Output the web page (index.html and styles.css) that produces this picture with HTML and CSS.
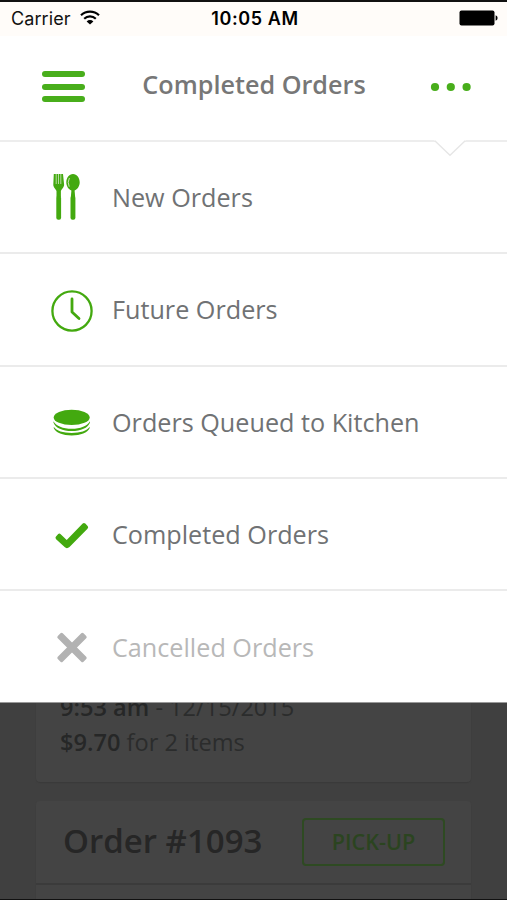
FILE: index.html
```
<!DOCTYPE html>
<html lang="en">
<head>
    <meta charset="UTF-8">
    <meta name="viewport" content="width=device-width, initial-scale=1.0">
    <title>Completed Orders</title>
    <link rel="stylesheet" href="styles.css">
</head>
<body>
    <div class="status-bar">
        <div class="carrier">
            <span>Carrier</span>
            <svg class="wifi" width="20" height="15" viewBox="0 0 20 15" fill="none" stroke="#000" stroke-width="2.2">
                <path d="M1 5.2a13 13 0 0 1 18 0"/>
                <path d="M4.2 8.7a8.4 8.4 0 0 1 11.6 0"/>
                <path d="M10 14.6L6.6 11.4a4.9 4.9 0 0 1 6.8 0z" fill="#000" stroke="none"/>
            </svg>
        </div>
        <div class="time">10:05 AM</div>
        <svg class="battery" width="39" height="16" viewBox="0 0 39 16">
            <rect x="0.5" y="0.5" width="35" height="15" rx="2"/>
            <path d="M36.6 5.2q2 0.8 2 2.8t-2 2.8z"/>
        </svg>
    </div>

    <header class="header">
        <button class="menu-button" aria-label="Menu">
            <span></span>
            <span></span>
            <span></span>
        </button>
        <h1>Completed Orders</h1>
        <svg class="more-button" width="42" height="10" viewBox="0 0 42 10" fill="#48ae1b">
            <circle cx="5" cy="5" r="4.1"/>
            <circle cx="20.8" cy="5" r="4.1"/>
            <circle cx="36.6" cy="5" r="4.1"/>
        </svg>
        <svg class="notch" width="32" height="17" viewBox="0 0 32 17">
            <path d="M0 0H32L16 15.5z" fill="#fff"/>
            <path d="M0.8 0.8L16 15.3L31.2 0.8" fill="none" stroke="#e6e6e6" stroke-width="1.4"/>
        </svg>
    </header>

    <ul class="menu">
        <li>
            <svg class="icon" width="44" height="48" viewBox="0 0 44 48" fill="#43a90f">
                <path d="M3.8 0H13L14.1 10.500c.2 2.800-2.400 4.200-3.200 6.500v6.500H6.500V17c-.8-2.300-3.400-3.700-3.200-6.500z"/>
                <path d="M6.2 0v10M8.5 0v10M10.8 0v10" stroke="#fff" stroke-width=".6"/>
                <rect x="6.3" y="22" width="4.8" height="23.7" rx="2"/>
                <path d="M23 0c3.900 0 6.700 3.900 6.700 8.300 0 4-2.300 7.200-5.100 8.300l.6 6.900h-4.400l.6-6.900c-2.800-1.100-5.100-4.300-5.100-8.300C16.300 3.900 19.100 0 23 0z"/>
                <path d="M19.400 4q-2.300 4.200-.2 8.700" fill="none" stroke="#fff" stroke-width=".7"/>
                <rect x="20.5" y="22" width="4.9" height="23.7" rx="2"/>
            </svg>
            <span>New Orders</span>
        </li>
        <li>
            <svg class="icon" width="44" height="48" viewBox="0 0 44 48" fill="none" stroke="#43a90f">
                <circle cx="22" cy="25" r="19.6" stroke-width="2.3"/>
                <path d="M22 13v13l7 6.6" stroke-width="2.8" stroke-linecap="round" stroke-linejoin="round"/>
            </svg>
            <span>Future Orders</span>
        </li>
        <li>
            <svg class="icon" width="44" height="48" viewBox="0 0 44 48" fill="#43a90f">
                <ellipse cx="21.7" cy="18.4" rx="18" ry="7.7"/>
                <path d="M3.5 22.2c2.5 4.9 9.5 7.500 18.200 7.500s15.700-2.600 18.200-7.500v1.500c-2 5.200-9 8.300-18.200 8.300S5.500 28.900 3.500 23.700z"/>
                <path d="M3.8 27.8c2.5 4.3 9.5 6.200 17.900 6.200s15.400-1.900 17.900-6.200v1.500c-2 4.400-9 7.200-17.900 7.200s-15.900-2.800-17.900-7.200z"/>
            </svg>
            <span>Orders Queued to Kitchen</span>
        </li>
        <li>
            <svg class="icon" width="44" height="48" viewBox="0 0 44 48">
                <path d="M6 25.5l2-2.200q1.300-1.300 2.700-.1l6 5.700L32.700 12.500q1.300-1.200 2.600.1l2.300 2.400q1.200 1.400-.1 2.700L19.500 36q-2.600 2.200-4.900.1L6.100 28.200q-1.300-1.300-.1-2.700z" fill="#43a90f"/>
            </svg>
            <span>Completed Orders</span>
        </li>
        <li class="disabled">
            <svg class="icon" width="44" height="48" viewBox="0 0 44 48" fill="#b2b2b2">
                <rect x="3.8" y="21" width="36.4" height="7" rx="1.6" transform="rotate(45 22 24.5)"/>
                <rect x="3.8" y="21" width="36.4" height="7" rx="1.6" transform="rotate(-45 22 24.5)"/>
            </svg>
            <span>Cancelled Orders</span>
        </li>
    </ul>

    <main class="orders">
        <section class="card card-prev">
            <p><b>9:53 am</b> - 12/15/2015</p>
            <p><b>$9.70</b> for 2 items</p>
        </section>
        <section class="card">
            <div class="card-head">
                <h2>Order #1093</h2>
                <div class="tag">PICK-UP</div>
            </div>
        </section>
    </main>
</body>
</html>
```
FILE: styles.css
```
* {
    box-sizing: border-box;
}

body {
    margin: 0;
    width: 507px;
    height: 900px;
    display: flex;
    flex-direction: column;
    overflow: hidden;
    font-family: 'Open Sans', 'Noto Sans', sans-serif;
    background-color: #fff;
    border-top: 2px solid #111;
    border-bottom: 1px solid #111;
}

h1, h2, p, ul {
    margin: 0;
    padding: 0;
}

button {
    border: none;
    padding: 0;
    background: transparent;
}

.status-bar {
    height: 34px;
    flex-shrink: 0;
    display: grid;
    grid-template-columns: 1fr auto 1fr;
    align-items: center;
    padding: 0 9px 2px 11px;
    background-color: #fffcf9;
    font-family: Inter, sans-serif;
    font-size: 18px;
    color: #111;
}

.carrier {
    display: flex;
    align-items: center;
    gap: 9px;
}

.carrier span {
    letter-spacing: 0.1px;
}

.wifi {
    margin-top: -2px;
}

.time {
    font-weight: 600;
    letter-spacing: 0.6px;
    padding-left: 1px;
    color: #000;
}

.battery {
    justify-self: end;
}

.header {
    position: relative;
    height: 106px;
    flex-shrink: 0;
    display: grid;
    grid-template-columns: 1fr auto 1fr;
    align-items: center;
    padding: 0 36px 3px 37px;
    border-bottom: 2px solid #ededed;
}

.header h1 {
    font-size: 25.2px;
    line-height: 34px;
    font-weight: 600;
    color: #777;
    padding-bottom: 5px;
}

.menu-button {
    width: 43px;
    margin-left: 5px;
    display: flex;
    flex-direction: column;
    gap: 6.5px;
}

.menu-button span {
    height: 6px;
    border-radius: 3px;
    background-color: #48ae1b;
}

.more-button {
    justify-self: end;
    margin-right: -1px;
}

.notch {
    position: absolute;
    right: 41px;
    top: 104px;
}

.menu {
    list-style: none;
    flex-shrink: 0;
}

.menu li {
    height: 112.25px;
    display: flex;
    align-items: center;
    gap: 18px;
    padding-left: 50px;
    border-bottom: 2px solid #ebebeb;
    font-size: 25.2px;
    color: #707274;
}

.menu li:last-child {
    border-bottom: 1px solid #999;
}

.menu .icon {
    position: relative;
    top: 1px;
}

.menu .disabled {
    color: #b8b8b8;
}

.menu .disabled .icon {
    top: 0;
}

.orders {
    flex: 1;
    display: flex;
    flex-direction: column;
    gap: 19px;
    min-height: 0;
    overflow: hidden;
    padding: 0 36px;
    background-color: #404040;
    color: #2b2c2c;
}

.card {
    flex-shrink: 0;
    height: 120px;
    background-color: #444;
    border-radius: 4px;
    box-shadow: 0 1px 1px #3a3a3a;
}

.card-prev {
    height: 79px;
    padding-left: 24px;
    display: flex;
    flex-direction: column;
    justify-content: flex-end;
    padding-bottom: 22px;
    border-radius: 0 0 4px 4px;
    font-size: 23.6px;
    line-height: 35px;
}

.card-prev b {
    font-weight: 600;
    color: #262727;
}

.card-head {
    height: 84px;
    display: flex;
    align-items: center;
    justify-content: space-between;
    padding: 0 26px 0 27px;
    border-bottom: 2px solid #3b3b3b;
}

.card-head h2 {
    font-size: 33px;
    line-height: 46px;
    padding-bottom: 2px;
    font-weight: 600;
    color: #262626;
}

.tag {
    width: 143px;
    height: 48px;
    border: 2px solid #2e4a22;
    border-radius: 4px;
    font-size: 21.6px;
    font-weight: 600;
    line-height: 44px;
    text-align: center;
    color: #2b4420;
}
```
